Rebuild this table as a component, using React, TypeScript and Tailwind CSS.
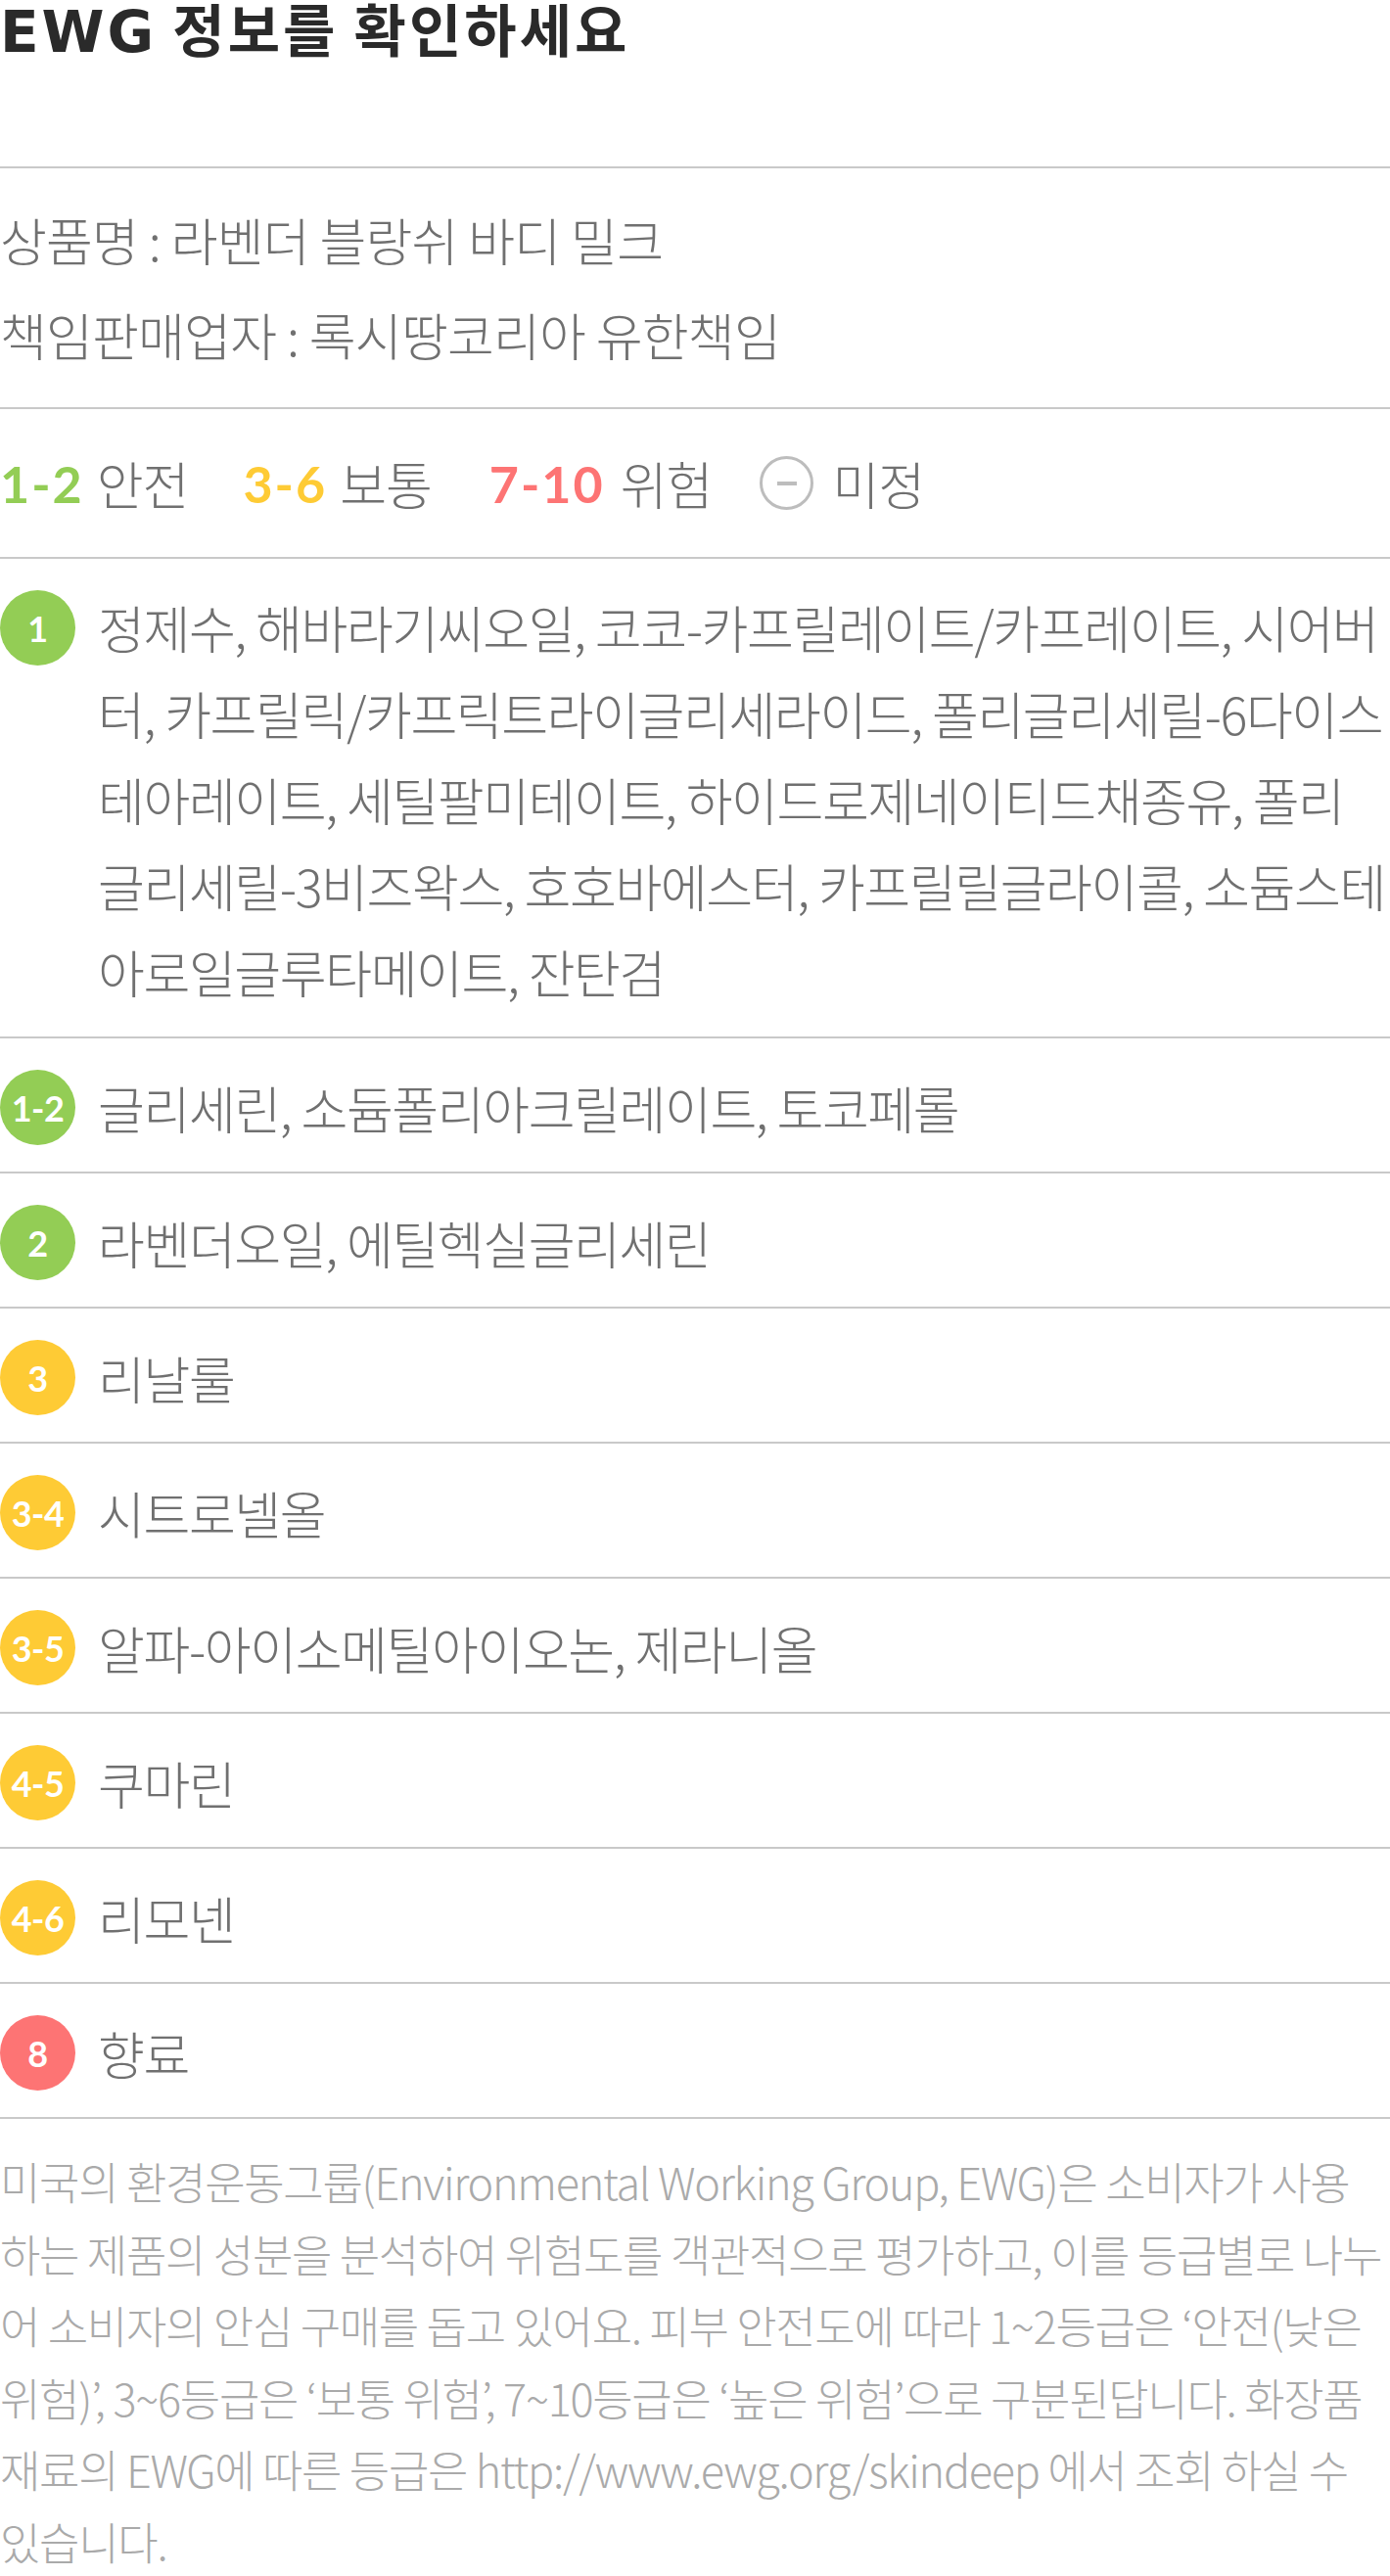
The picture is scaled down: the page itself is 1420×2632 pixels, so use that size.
import React from "react";

type Level = "safe" | "normal" | "danger";

interface IIngredient {
  grade: string;
  level: Level;
  lines: string[];
}

const ingredients: IIngredient[] = [
  {
    grade: "1",
    level: "safe",
    lines: [
      "정제수, 해바라기씨오일, 코코-카프릴레이트/카프레이트, 시어버",
      "터, 카프릴릭/카프릭트라이글리세라이드, 폴리글리세릴-6다이스",
      "테아레이트, 세틸팔미테이트, 하이드로제네이티드채종유, 폴리",
      "글리세릴-3비즈왁스, 호호바에스터, 카프릴릴글라이콜, 소듐스테",
      "아로일글루타메이트, 잔탄검",
    ],
  },
  { grade: "1-2", level: "safe", lines: ["글리세린, 소듐폴리아크릴레이트, 토코페롤"] },
  { grade: "2", level: "safe", lines: ["라벤더오일, 에틸헥실글리세린"] },
  { grade: "3", level: "normal", lines: ["리날룰"] },
  { grade: "3-4", level: "normal", lines: ["시트로넬올"] },
  { grade: "3-5", level: "normal", lines: ["알파-아이소메틸아이오논, 제라니올"] },
  { grade: "4-5", level: "normal", lines: ["쿠마린"] },
  { grade: "4-6", level: "normal", lines: ["리모넨"] },
  { grade: "8", level: "danger", lines: ["향료"] },
];

const notice = [
  "미국의 환경운동그룹(Environmental Working Group, EWG)은 소비자가 사용",
  "하는 제품의 성분을 분석하여 위험도를 객관적으로 평가하고, 이를 등급별로 나누",
  "어 소비자의 안심 구매를 돕고 있어요. 피부 안전도에 따라 1~2등급은 ‘안전(낮은",
  "위험)’, 3~6등급은 ‘보통 위험’, 7~10등급은 ‘높은 위험’으로 구분된답니다. 화장품",
  "재료의 EWG에 따른 등급은 http://www.ewg.org/skindeep 에서 조회 하실 수",
  "있습니다.",
];

const badgeBg: Record<Level, string> = {
  safe: "bg-[#93cd55]",
  normal: "bg-[#fecb35]",
  danger: "bg-[#fd7474]",
};

function Badge({ grade, level }: { grade: string; level: Level }) {
  return (
    <span
      className={`flex h-[77px] w-[77px] shrink-0 items-center justify-center rounded-full font-['Lato',sans-serif] text-[36px] font-bold tracking-[-0.5px] text-white ${badgeBg[level]}`}
    >
      {grade}
    </span>
  );
}

function App() {
  const [first, ...rest] = ingredients;

  return (
    <div className="w-[1420px] bg-white font-['Noto_Sans_CJK_KR',sans-serif]">
      <div className="h-[170px]">
        <h1 className="text-[58px] font-bold leading-[56px] tracking-[3px] text-[#2a2a2a]">
          <span className="font-['DejaVu_Sans',sans-serif] tracking-[3px]">EWG</span> 정보를 확인하세요
        </h1>
      </div>

      <div className="border-t-2 border-[#c9c9c9] pt-[24px] pb-[26px] text-[52px] font-light leading-[97px] tracking-[-0.8px] text-[#707070]">
        <p>상품명 : 라벤더 블랑쉬 바디 밀크</p>
        <p>책임판매업자 : 록시땅코리아 유한책임</p>
      </div>

      <div className="flex h-[153px] items-center border-t-2 border-[#c9c9c9] text-[52px] font-light tracking-[-1px] text-[#707070]">
        <div className="flex items-center gap-[13px]">
          <span className="font-['Lato',sans-serif] text-[52px] font-bold tracking-[2px] text-[#93cd55]">1-2</span>
          <span>안전</span>
        </div>
        <div className="ml-[56px] flex items-center gap-[13px]">
          <span className="font-['Lato',sans-serif] text-[52px] font-bold tracking-[2px] text-[#fecb35]">3-6</span>
          <span>보통</span>
        </div>
        <div className="ml-[59px] flex items-center gap-[16px]">
          <span className="font-['Lato',sans-serif] text-[52px] font-bold tracking-[2px] text-[#fd7474]">7-10</span>
          <span>위험</span>
        </div>
        <div className="ml-[49px] flex items-center gap-[19px]">
          <span className="flex h-[55px] w-[55px] items-center justify-center rounded-full border-[3px] border-[#bdbdbd]">
            <span className="h-[4px] w-[20px] bg-[#bdbdbd]" />
          </span>
          <span>미정</span>
        </div>
      </div>

      <div className="flex items-start gap-[23px] border-t-2 border-[#c9c9c9] pt-[26px] pb-[22px]">
        <span className="mt-[6px]">
          <Badge grade={first.grade} level={first.level} />
        </span>
        <p className="text-[52px] font-light leading-[88px] tracking-[-1.4px] text-[#707070]">
          {first.lines.map((line) => (
            <span key={line} className="block whitespace-nowrap">
              {line}
            </span>
          ))}
        </p>
      </div>

      {rest.map((item) => (
        <div
          key={item.grade}
          className="flex h-[138px] items-center gap-[23px] border-t-2 border-[#c9c9c9] pt-[5px]"
        >
          <Badge grade={item.grade} level={item.level} />
          <p className="text-[52px] font-light leading-[88px] tracking-[-1.4px] text-[#707070]">
            {item.lines[0]}
          </p>
        </div>
      ))}

      <div className="border-t-2 border-[#c9c9c9] pt-[27px]">
        <p className="text-[45px] font-light leading-[73.5px] tracking-[-1.3px] text-[#aaaaaa]">
          {notice.map((line) => (
            <span key={line} className="block whitespace-nowrap">
              {line}
            </span>
          ))}
        </p>
      </div>
    </div>
  );
}

export default App;
